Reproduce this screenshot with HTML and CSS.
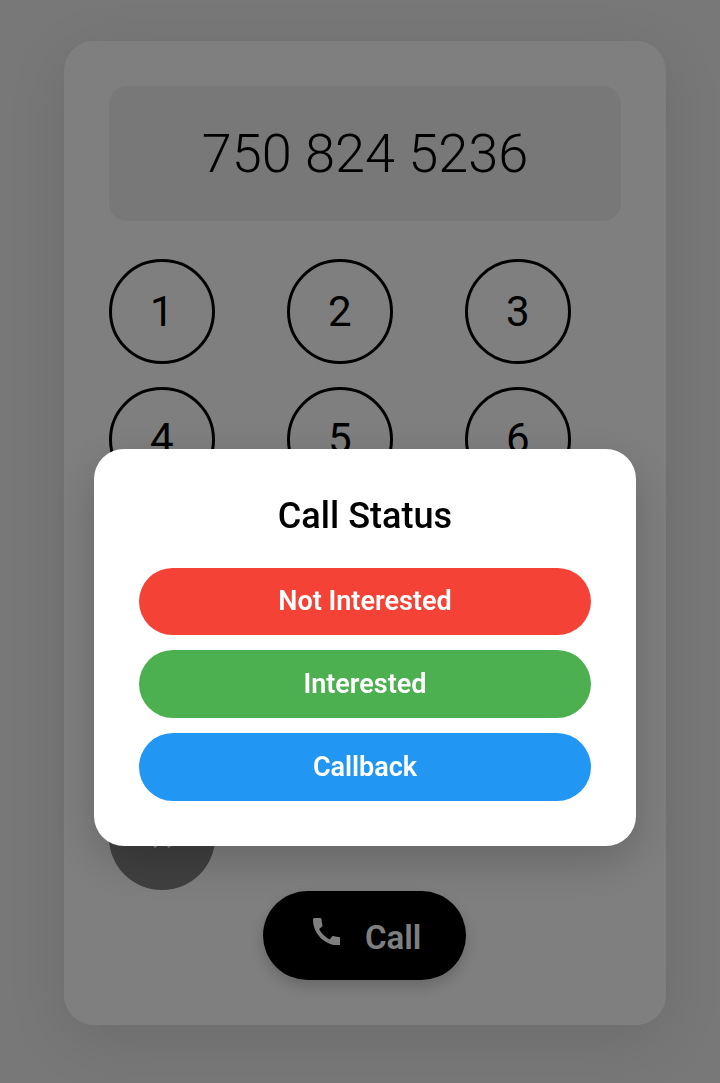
FILE: index.html
```html
<!DOCTYPE html>
<html lang="en">
<head>
<meta charset="utf-8">
<title>Dialer</title>
<link rel="stylesheet" href="styles.css">
</head>
<body>
<main class="dialer">
  <div class="display">750 824 5236</div>
  <div class="keypad">
    <button class="key">1</button><button class="key">2</button><button class="key">3</button>
    <button class="key">4</button><button class="key">5</button><button class="key">6</button>
    <button class="key">7</button><button class="key">8</button><button class="key">9</button>
    <button class="key">*</button><button class="key">0</button><button class="key">#</button>
  </div>
  <button class="clear" aria-label="Clear">
    <svg class="clear-icon" viewBox="0 0 20 20"><path d="M2 1L18 19M18 1L2 19"/></svg>
  </button>
  <button class="call">
    <svg class="call-icon" viewBox="3 3 18 18"><path d="M20.01 15.38c-1.23 0-2.42-.2-3.53-.56-.35-.12-.74-.03-1.01.24l-1.57 1.97c-2.83-1.35-5.48-3.9-6.89-6.83l1.95-1.66c.27-.28.35-.67.24-1.02-.37-1.11-.56-2.3-.56-3.53 0-.54-.45-.99-.99-.99H4.19C3.65 3 3 3.24 3 3.99 3 13.28 10.73 21 20.01 21c.71 0 .99-.63.99-1.18v-3.45c0-.54-.45-.99-.99-.99z"/></svg>
    <span>Call</span>
  </button>
</main>
<div class="overlay">
  <section class="modal" role="dialog" aria-labelledby="status-title">
    <h2 class="modal-title" id="status-title">Call Status</h2>
    <div class="choices">
      <button class="choice choice-no">Not Interested</button>
      <button class="choice choice-yes">Interested</button>
      <button class="choice choice-later">Callback</button>
    </div>
  </section>
</div>
</body>
</html>
```
FILE: styles.css
```css
* {
  box-sizing: border-box;
}

body {
  margin: 0;
  height: 1083px;
  padding: 40.8px 54.2px 0 64.2px;
  overflow: hidden;
  background: #f0f0f0;
  font-family: Roboto, "Liberation Sans", sans-serif;
}

button {
  padding: 0;
  border: 0;
  font-family: inherit;
}

.dialer {
  width: 601.6px;
  height: 984.2px;
  padding: 45.1px;
  border-radius: 30px;
  background: #fff;
  box-shadow: 0 15px 60px rgba(0, 0, 0, 0.1);
}

.display {
  height: 135.2px;
  margin-bottom: 37.8px;
  border-radius: 18px;
  background: #f0f0f0;
  color: #000;
  font-size: 54.1px;
  font-weight: 300;
  line-height: 135px;
  text-align: center;
}

.keypad {
  display: grid;
  grid-template-columns: repeat(3, 1fr);
  gap: 22.6px;
}

.key {
  width: 105.3px;
  height: 105.3px;
  padding-bottom: 1px;
  border: 3px solid #000;
  border-radius: 50%;
  background: #fff;
  color: #000;
  font-size: 42.1px;
}

.clear {
  display: flex;
  align-items: center;
  justify-content: center;
  width: 105.3px;
  height: 105.3px;
  margin-top: 37.3px;
  border-radius: 50%;
  background: #808080;
}

.clear-icon {
  width: 20px;
  height: 20px;
  fill: none;
  stroke: #fff;
  stroke-width: 3.5;
}

.call {
  display: flex;
  align-items: center;
  width: 203px;
  height: 89.5px;
  margin: 0.5px auto 0;
  padding: 3px 0 0 49.5px;
  gap: 24.5px;
  border-radius: 45px;
  background: #000;
  box-shadow: 0 6px 15px rgba(0, 0, 0, 0.2);
  color: #fff;
  font-size: 33px;
  font-weight: 600;
}

.call-icon {
  width: 27.5px;
  height: 27.5px;
  margin-bottom: 11px;
  fill: #fff;
}

.overlay {
  position: fixed;
  inset: 0;
  display: flex;
  align-items: flex-start;
  padding: 449.4px 0 0 94.2px;
  background: rgba(0, 0, 0, 0.5);
}

.modal {
  width: 541.6px;
  height: 396.6px;
  padding: 45.2px;
  border-radius: 30px;
  background: #fff;
  box-shadow: 0 15px 45px rgba(0, 0, 0, 0.2);
}

.modal-title {
  margin: 0 0 30px;
  color: #000;
  font-size: 36.1px;
  font-weight: 500;
  line-height: 43px;
  text-align: center;
}

.choices {
  display: flex;
  flex-direction: column;
  gap: 15.2px;
}

.choice {
  height: 67.6px;
  border-radius: 38px;
  color: #fff;
  font-size: 27px;
  font-weight: 600;
}

.choice-no {
  background: #f44336;
}

.choice-yes {
  background: #4caf50;
}

.choice-later {
  background: #2196f3;
}
```
